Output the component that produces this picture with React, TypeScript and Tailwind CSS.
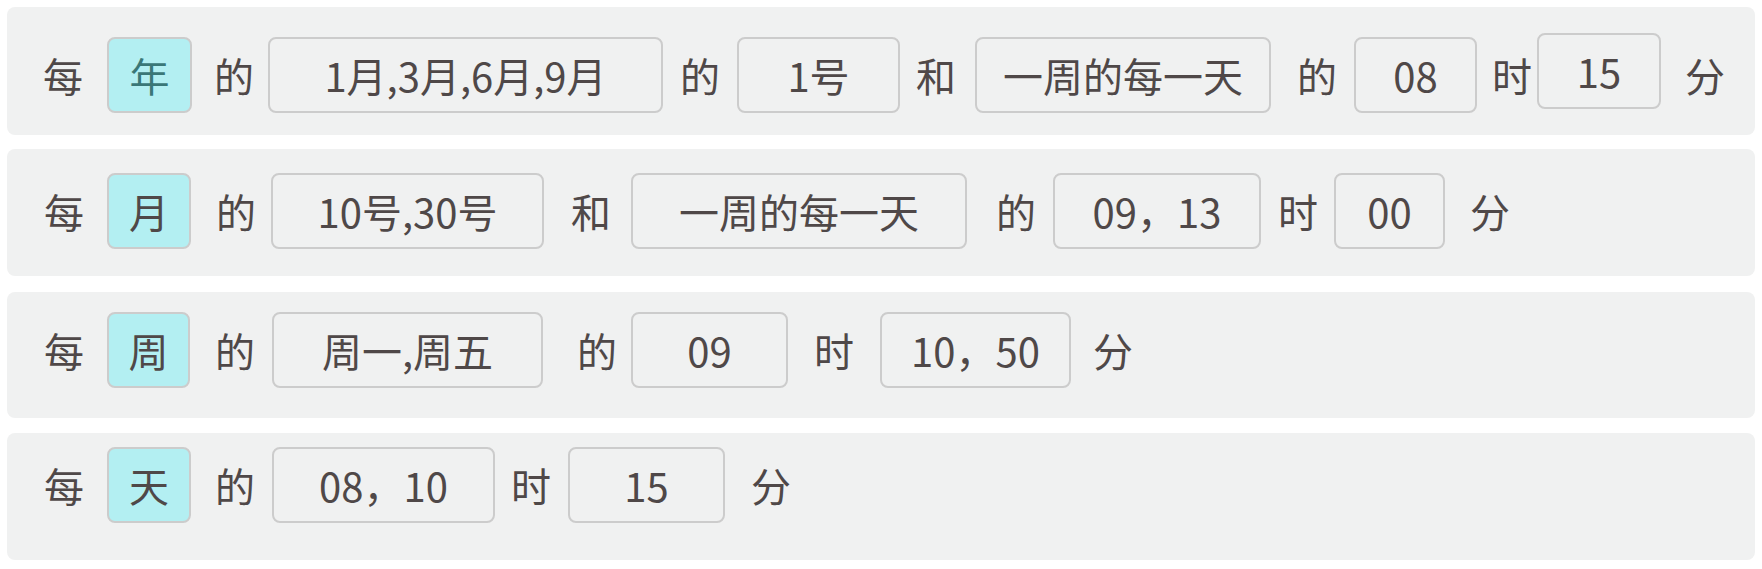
import React, { ReactNode } from "react";

// static label between the fields
function Label({ children, className = "" }: { children: ReactNode; className?: string }) {
  return (
    <span className={`h-[76px] w-[36px] shrink-0 flex items-center justify-center whitespace-nowrap ${className}`}>
      {children}
    </span>
  );
}

// field box
function Field({
  children,
  className = "",
  active = false,
}: {
  children: ReactNode;
  className?: string;
  active?: boolean;
}) {
  return (
    <div
      className={`h-[76px] shrink-0 flex items-center justify-center whitespace-nowrap rounded-lg border-2 border-[#cccccc] ${
        active ? "bg-[#b3eff2]" : "bg-[#f0f1f1]"
      } ${className}`}
    >
      {children}
    </div>
  );
}

function Panel({ children, className = "" }: { children: ReactNode; className?: string }) {
  return <div className={`mx-[7px] rounded-lg bg-[#f0f1f1] flex items-start ${className}`}>{children}</div>;
}

export default function App() {
  return (
    <div className="w-[1762px] h-[569px] bg-white overflow-hidden text-[40px] leading-none text-[#4f4848] font-['Noto_Sans_CJK_SC','Noto_Sans',sans-serif]">
      {/* 每年 */}
      <Panel className="mt-[7px] h-[128px] pt-[30px] pl-[38px]">
        <Label>每</Label>
        <Field active className="ml-[26px] w-[85px] text-[#3a7777]">年</Field>
        <Label className="ml-[24px]">的</Label>
        <Field className="ml-[16px] w-[395px]">1月,3月,6月,9月</Field>
        <Label className="ml-[19px]">的</Label>
        <Field className="ml-[19px] w-[163px]">1号</Field>
        <Label className="ml-[18px]">和</Label>
        <Field className="ml-[21px] w-[296px]">一周的每一天</Field>
        <Label className="ml-[28px]">的</Label>
        <Field className="ml-[19px] w-[123px]">08</Field>
        <Label className="ml-[17px]">时</Label>
        <Field className="ml-[7px] w-[124px] -mt-[4px]">15</Field>
        <Label className="ml-[26px]">分</Label>
      </Panel>

      {/* 每月 */}
      <Panel className="mt-[14px] h-[127px] pt-[24px] pl-[39px]">
        <Label>每</Label>
        <Field active className="ml-[25px] w-[84px]">月</Field>
        <Label className="ml-[27px]">的</Label>
        <Field className="ml-[17px] w-[273px]">10号,30号</Field>
        <Label className="ml-[29px]">和</Label>
        <Field className="ml-[22px] w-[336px]">一周的每一天</Field>
        <Label className="ml-[31px]">的</Label>
        <Field className="ml-[19px] w-[208px]">09，13</Field>
        <Label className="ml-[19px]">时</Label>
        <Field className="ml-[18px] w-[111px]">00</Field>
        <Label className="ml-[27px]">分</Label>
      </Panel>

      {/* 每周 */}
      <Panel className="mt-[16px] h-[126px] pt-[20px] pl-[39px]">
        <Label>每</Label>
        <Field active className="ml-[25px] w-[83px]">周</Field>
        <Label className="ml-[27px]">的</Label>
        <Field className="ml-[19px] w-[271px]">周一,周五</Field>
        <Label className="ml-[36px]">的</Label>
        <Field className="ml-[16px] w-[157px]">09</Field>
        <Label className="ml-[28px]">时</Label>
        <Field className="ml-[28px] w-[191px]">10，50</Field>
        <Label className="ml-[24px]">分</Label>
      </Panel>

      {/* 每天 */}
      <Panel className="mt-[15px] h-[127px] pt-[14px] pl-[39px]">
        <Label>每</Label>
        <Field active className="ml-[25px] w-[84px]">天</Field>
        <Label className="ml-[26px]">的</Label>
        <Field className="ml-[19px] w-[223px]">08，10</Field>
        <Label className="ml-[18px]">时</Label>
        <Field className="ml-[19px] w-[157px]">15</Field>
        <Label className="ml-[28px]">分</Label>
      </Panel>
    </div>
  );
}
